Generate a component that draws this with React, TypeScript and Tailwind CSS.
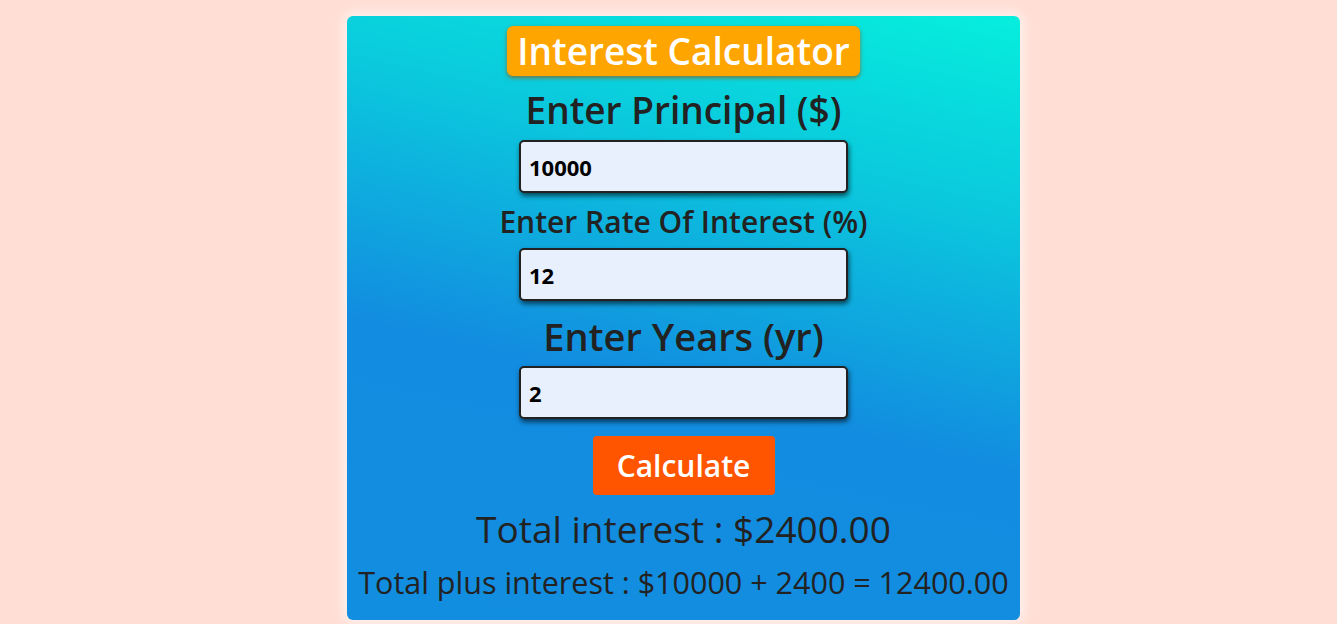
export default function App() {
  return (
    <div className="min-h-screen bg-[#ffded5] flex justify-center pt-4 pl-[30px] font-['Open_Sans',sans-serif]">
      <div className="w-[673px] h-[604px] rounded-md bg-[linear-gradient(193deg,#06eedd_0%,#0bc6dd_28%,#128ce0_60%,#128ee0_100%)] shadow-[0_0_12px_4px_rgba(255,255,255,0.6)] flex flex-col items-center pt-[10px]">
        <h1 className="bg-[#ffa500] text-white font-semibold text-[37px] leading-[50px] px-[10px] rounded-md shadow-[0_2px_4px_rgba(160,80,0,0.7)]">
          Interest Calculator
        </h1>
        <label className="mt-[4px] text-[#222] font-semibold text-[37px] leading-[60px]">Enter Principal ($)</label>
        <input
          className="w-[329px] h-[53px] bg-[#e8f0fe] border-2 border-[#222] rounded-[5px] px-2 text-[22px] font-bold text-black shadow-[1px_3px_5px_rgba(0,0,0,0.6)] outline-none"
          defaultValue="10000"
        />
        <label className="mt-[3px] text-[#222] font-semibold text-[30px] leading-[52px]">Enter Rate Of Interest (%)</label>
        <input
          className="w-[329px] h-[53px] bg-[#e8f0fe] border-2 border-[#222] rounded-[5px] px-2 text-[22px] font-bold text-black shadow-[1px_3px_5px_rgba(0,0,0,0.6)] outline-none"
          defaultValue="12"
        />
        <label className="mt-[6px] text-[#222] font-semibold text-[38px] leading-[59px]">Enter Years (yr)</label>
        <input
          className="w-[329px] h-[53px] bg-[#e8f0fe] border-2 border-[#222] rounded-[5px] px-2 text-[22px] font-bold text-black shadow-[1px_3px_5px_rgba(0,0,0,0.6)] outline-none"
          defaultValue="2"
        />
        <button className="mt-[17px] w-[182px] h-[59px] bg-[#ff5500] text-white font-semibold text-[30px] rounded-[4px]">
          Calculate
        </button>
        <p className="mt-[9px] text-[#222] text-[37px] leading-[50px]">Total interest : $2400.00</p>
        <p className="mt-[3px] text-[#222] text-[30.5px] leading-[50px] whitespace-nowrap">Total plus interest : $10000 + 2400 = 12400.00</p>
      </div>
    </div>
  );
}
